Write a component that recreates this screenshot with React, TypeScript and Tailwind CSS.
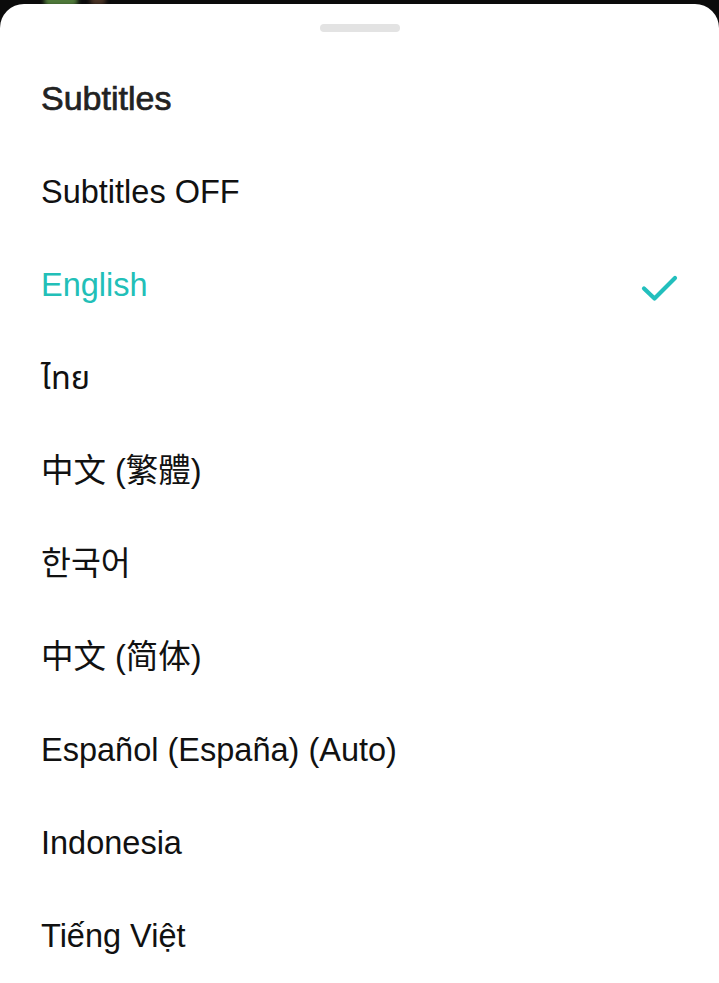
import { useState } from "react";

type Lang = {
  id: string;
  label: string;
  font?: string;
};

const languages: Lang[] = [
  { id: "off", label: "Subtitles OFF" },
  { id: "en", label: "English" },
  { id: "th", label: "ไทย" },
  { id: "zh-TW", label: "中文 (繁體)", font: "tc" },
  { id: "ko", label: "한국어", font: "kr" },
  { id: "zh-CN", label: "中文 (简体)", font: "sc" },
  { id: "es", label: "Español (España) (Auto)" },
  { id: "id", label: "Indonesia" },
  { id: "vi", label: "Tiếng Việt" },
];

const fontClass = (font?: string) => {
  if (font === "tc")
    return "font-['Liberation_Sans','Noto_Sans_CJK_TC',sans-serif]";
  if (font === "kr")
    return "font-['Liberation_Sans','Noto_Sans_CJK_KR',sans-serif]";
  if (font === "sc")
    return "font-['Liberation_Sans','Noto_Sans_CJK_SC',sans-serif]";
  return "font-['Liberation_Sans','Noto_Sans_Thai','DejaVu_Sans',sans-serif]";
};

const CheckIcon = () => (
  <svg width="40" height="30" viewBox="0 0 40 30" fill="none" className="mt-[8px]">
    <path
      d="M4 13.5 L14.5 23.5 L35 3"
      stroke="#22bfbd"
      strokeWidth="4.2"
      strokeLinecap="round"
      strokeLinejoin="round"
    />
  </svg>
);

const App = () => {
  const [selected, setSelected] = useState<string>("en");

  return (
    <div className="relative h-[983px] w-full overflow-hidden bg-[#0b0b0b]">
      {/* bits of the video peeking behind the sheet */}
      <span className="absolute left-[44px] top-[-4px] h-[10px] w-[34px] rounded-full bg-[#4f7a3a] blur-[2px]" />
      <span className="absolute left-[90px] top-[-4px] h-[9px] w-[16px] rounded-full bg-[#4a3426] blur-[2px]" />

      <div className="relative mt-[4px] flex h-[979px] flex-col rounded-t-[24px] bg-white pt-[20px]">
        <div className="mx-auto h-2 w-20 rounded-full bg-[#e3e3e3]" />

        <div className="mt-5 flex h-[93px] items-center px-[41px]">
          <h2 className="font-['Liberation_Sans',sans-serif] text-[34px] leading-none text-[#222] [-webkit-text-stroke:0.7px_#222]">
            Subtitles
          </h2>
        </div>

        <ul className="mt-[2px] flex flex-col">
          {languages.map((lang) => {
            const active = lang.id === selected;
            return (
              <li key={lang.id}>
                <button
                  type="button"
                  onClick={() => setSelected(lang.id)}
                  className={`flex h-[93px] w-full items-center justify-between pl-[41px] pr-[39px] text-left text-[32.5px] leading-none ${fontClass(
                    lang.font
                  )} ${active ? "text-[#22bfb8]" : "text-[#111]"}`}
                >
                  <span>{lang.label}</span>
                  {active && <CheckIcon />}
                </button>
              </li>
            );
          })}
        </ul>
      </div>
    </div>
  );
};

export default App;
